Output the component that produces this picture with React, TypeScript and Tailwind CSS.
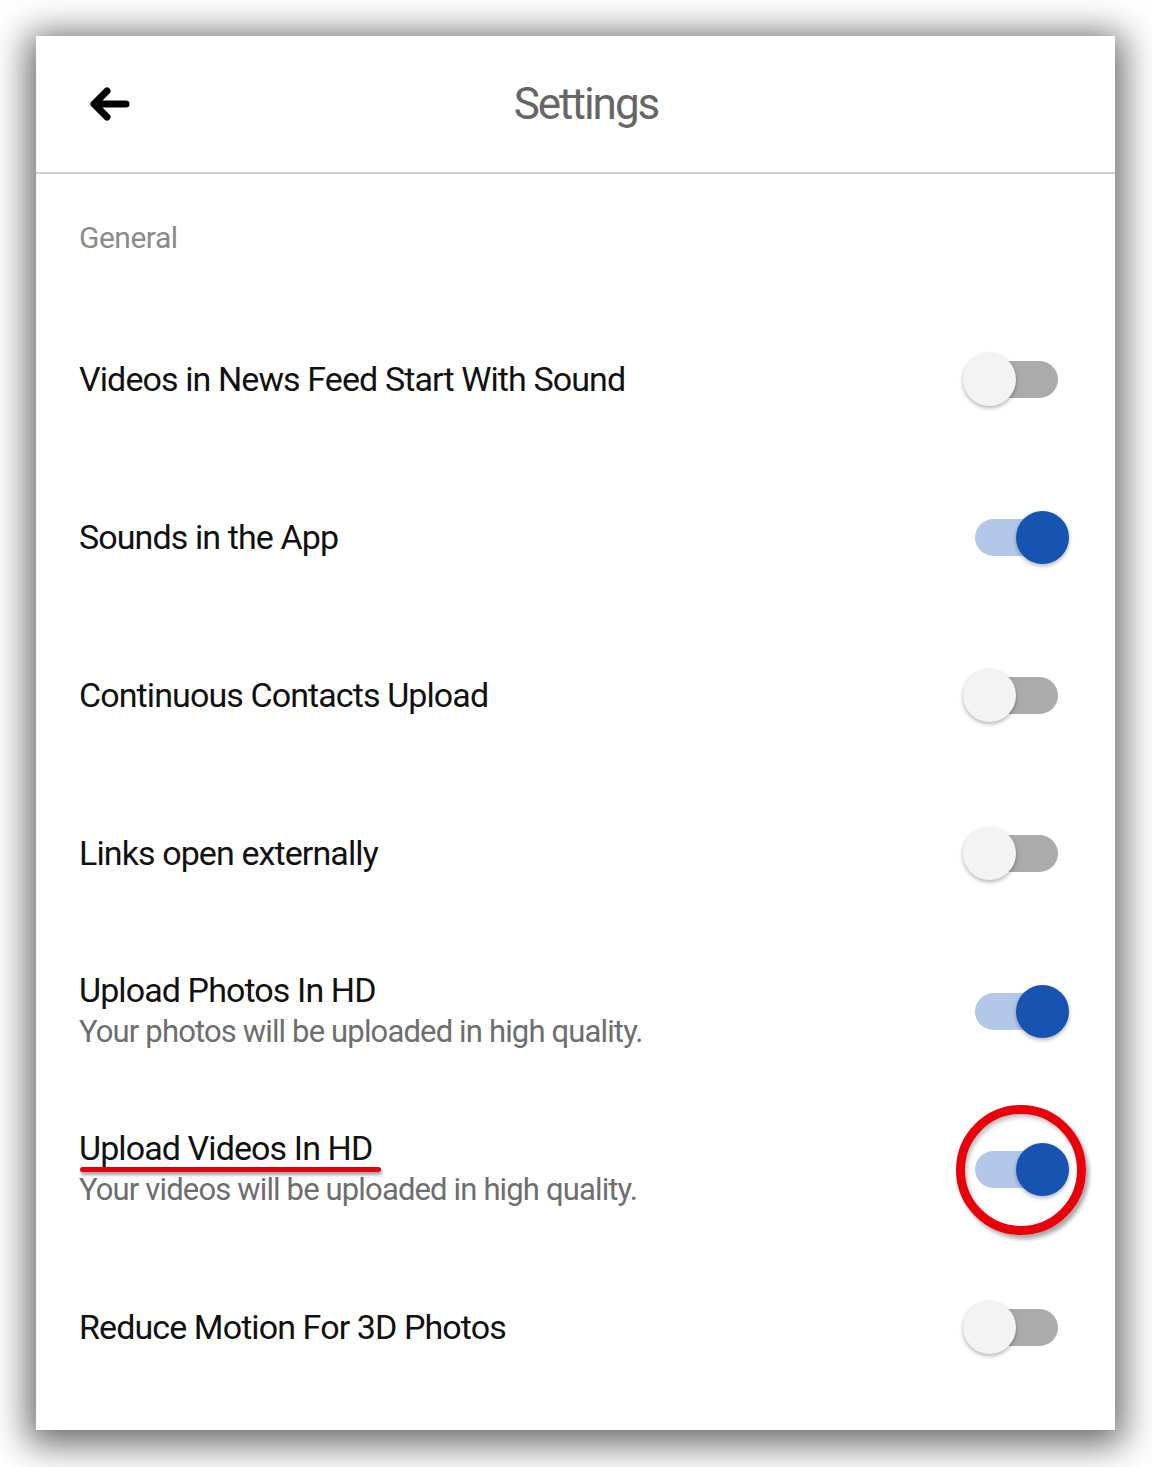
import React from "react";

type Setting = {
  title: string;
  subtitle?: string;
  on: boolean;
  marked?: boolean;
};

const settings: Setting[] = [
  { title: "Videos in News Feed Start With Sound", on: false },
  { title: "Sounds in the App", on: true },
  { title: "Continuous Contacts Upload", on: false },
  { title: "Links open externally", on: false },
  {
    title: "Upload Photos In HD",
    subtitle: "Your photos will be uploaded in high quality.",
    on: true,
  },
  {
    title: "Upload Videos In HD",
    subtitle: "Your videos will be uploaded in high quality.",
    on: true,
    marked: true,
  },
  { title: "Reduce Motion For 3D Photos", on: false },
];

function Toggle({ on, marked }: { on: boolean; marked?: boolean }) {
  return (
    <div className="relative w-[106px] h-[53px] shrink-0">
      <div
        className={
          "absolute left-[12px] top-[8px] w-[83px] h-[37px] rounded-full " +
          (on ? "bg-[#b3c8e9]" : "bg-[#ababab]")
        }
      />
      <div
        className={
          "absolute top-0 w-[53px] h-[53px] rounded-full shadow-[0_2px_4px_rgba(0,0,0,0.3)] " +
          (on ? "left-[53px] bg-[#1753b1]" : "left-0 bg-[#f3f3f3]")
        }
      />
      {marked && (
        <div className="absolute left-[-7px] top-[-38px] w-[130px] h-[130px] rounded-full border-[9px] border-[#e8000b] shadow-[3px_4px_4px_rgba(0,0,0,0.35),inset_2px_3px_4px_rgba(0,0,0,0.25)]" />
      )}
    </div>
  );
}

export default function App() {
  return (
    <div
      className="w-[1152px] h-[1467px] bg-white pt-[36px] pl-[36px]"
      style={{ fontFamily: "Roboto, 'Liberation Sans', sans-serif" }}>
      <div className="w-[1079px] h-[1394px] bg-white shadow-[0_6px_34px_8px_rgba(0,0,0,0.6)] flex flex-col">
        <header className="h-[138px] border-b-2 border-[#cfcfcf] flex items-center pl-[52px] pr-[73px] shrink-0">
          <svg width="42" height="34" viewBox="0 0 42 34" className="shrink-0">
            <path
              d="M38 17 H7 M19 4 L6 17 L19 30"
              fill="none"
              stroke="#000"
              strokeWidth="7"
              strokeLinecap="round"
              strokeLinejoin="round"
            />
          </svg>
          <h1 className="flex-1 text-center text-[44px] leading-none text-[#666666] tracking-[-2px]">
            Settings
          </h1>
        </header>

        <div className="h-[126px] flex items-center pl-[43px] text-[30px] text-[#8b8b8b] tracking-[-0.5px]">
          General
        </div>

        {settings.map((s) => (
          <div
            key={s.title}
            className="h-[158px] flex items-center justify-between pl-[43px] pr-[46px]">
            <div className="flex flex-col">
              <div className="relative text-[34px] leading-[42px] text-[#111111] tracking-[-0.9px]">
                {s.title}
                {s.marked && (
                  <div className="absolute left-[1px] bottom-[-3px] w-[301px] h-[5px] rounded-full bg-[#e3000f] shadow-[1px_3px_3px_rgba(0,0,0,0.35)]" />
                )}
              </div>
              {s.subtitle && (
                <div className="text-[31px] leading-[42px] text-[#6e6e6e] tracking-[-0.85px]">
                  {s.subtitle}
                </div>
              )}
            </div>
            <Toggle on={s.on} marked={s.marked} />
          </div>
        ))}
      </div>
    </div>
  );
}
